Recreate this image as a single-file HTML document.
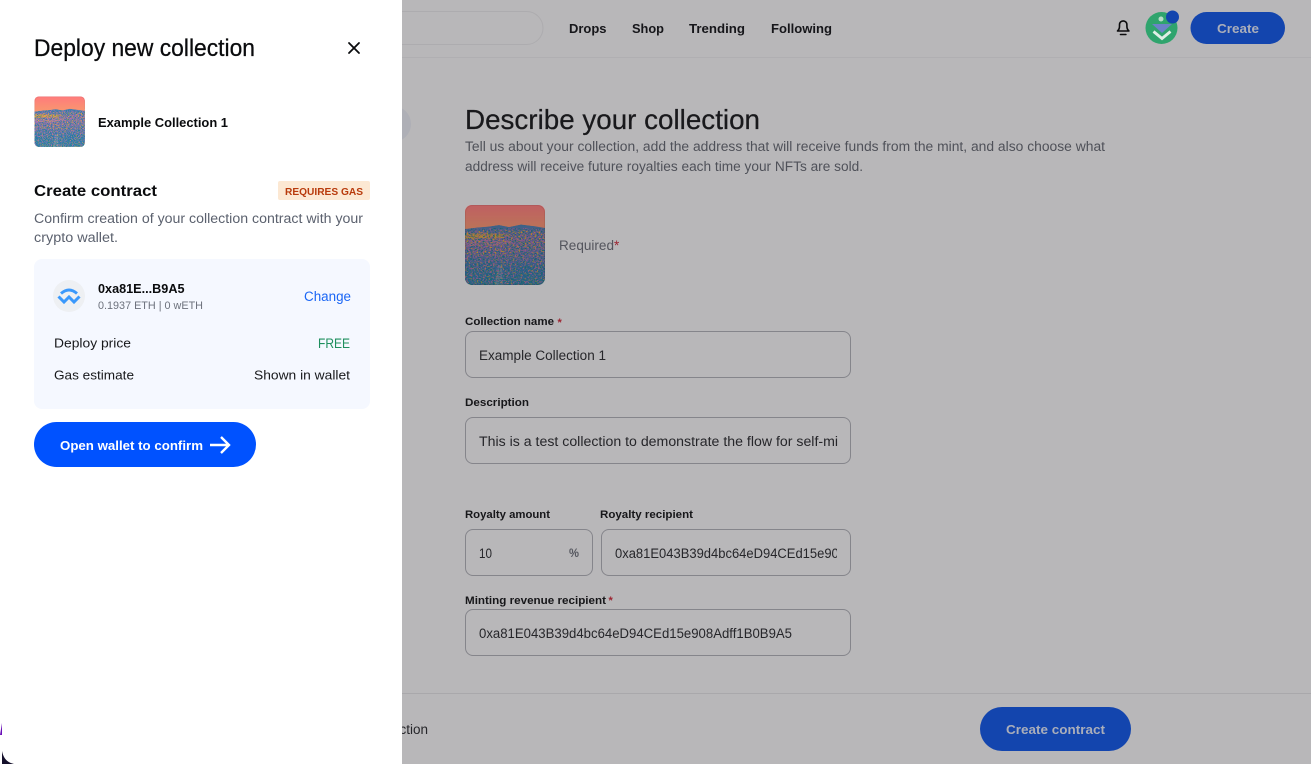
<!DOCTYPE html>
<html lang="en"><head><meta charset="utf-8"><title>Deploy new collection</title>
<style>
html,body{margin:0;padding:0;width:1311px;height:764px;overflow:hidden;background:#b8b7b9}
svg{display:block}
text{font-family:"Liberation Sans",sans-serif;white-space:pre}
.b{font-weight:700}
filter{color-interpolation-filters:sRGB}
</style></head><body>
<svg width="1311" height="764" viewBox="0 0 1311 764" xmlns="http://www.w3.org/2000/svg">
<defs>
<linearGradient id="sky" x1="0" y1="0" x2="0" y2="1"><stop offset="0" stop-color="#ff7b7c"/><stop offset="1" stop-color="#f8976f"/></linearGradient>
<linearGradient id="land" x1="0" y1="0" x2="0" y2="1"><stop offset="0" stop-color="#3f7fb0"/><stop offset=".2" stop-color="#8873ae"/><stop offset=".5" stop-color="#6f74b0"/><stop offset=".72" stop-color="#3a78b4"/><stop offset="1" stop-color="#2b82ab"/></linearGradient>
<filter id="sp1" x="0" y="0" width="100%" height="100%" color-interpolation-filters="sRGB"><feTurbulence type="fractalNoise" baseFrequency=".5 .8" numOctaves="2" seed="4"/><feColorMatrix values="0 0 0 0 .95  0 0 0 0 .68  0 0 0 0 .18  12 0 0 0 -7.2"/></filter>
<filter id="sp2" x="0" y="0" width="100%" height="100%" color-interpolation-filters="sRGB"><feTurbulence type="fractalNoise" baseFrequency=".6" numOctaves="2" seed="9"/><feColorMatrix values="0 0 0 0 .78  0 0 0 0 .42  0 0 0 0 .70  12 0 0 0 -6.8"/></filter>
<filter id="sp3" x="0" y="0" width="100%" height="100%" color-interpolation-filters="sRGB"><feTurbulence type="fractalNoise" baseFrequency=".5 .9" numOctaves="2" seed="15"/><feColorMatrix values="0 0 0 0 .10  0 0 0 0 .50  0 0 0 0 .58  12 0 0 0 -6.2"/></filter>
<clipPath id="c1"><rect width="80" height="80" rx="7"/></clipPath>
<clipPath id="addr"><rect x="466" y="530" width="371" height="44"/></clipPath>
<clipPath id="desc"><rect x="466" y="418" width="372" height="44"/></clipPath>
<g id="art"><g clip-path="url(#c1)">
<rect width="80" height="26" fill="url(#sky)"/>
<path d="M0 24 L12 22.500 L24 21.500 L34 20 L44 22 L56 19.500 L68 21 L80 23 V80 H0Z" fill="url(#land)"/>
<path d="M0 29 Q22 27 46 30 L34 33 Q14 33 0 34Z" fill="#e0a63a" opacity=".85"/>
<path d="M0 36 Q24 33 50 37 L30 41 Q12 40 0 42Z" fill="#cf7fae" opacity=".6"/>
<path d="M30 80 L33 60 L37 60 L38 80Z" fill="#a8b4bc" opacity=".45"/>
<rect y="23" width="80" height="57" filter="url(#sp3)"/>
<rect y="23" width="80" height="57" filter="url(#sp2)" opacity=".85"/>
<rect y="25" width="80" height="26" filter="url(#sp1)"/>
<rect y="51" width="80" height="29" filter="url(#sp1)" opacity=".6"/>
<path d="M0 0H80V20L68 21 56 19.500 44 22 34 20 24 21.500 12 22.500 0 24Z" fill="url(#sky)"/>
</g><rect x=".5" y=".5" width="79" height="79" rx="7" fill="none" stroke="#000" stroke-opacity=".08"/></g>
</defs>

<rect width="1311" height="764" fill="#b8b7b9"/>

<!-- top nav -->
<rect x="300" y="11.500" width="243" height="33" rx="16.500" fill="none" stroke="#adacaf"/>
<rect x="402" y="57" width="909" height="1" fill="#b0afb2"/>
<g font-size="13" class="b" fill="#16161a">
<text x="569" y="33" textLength="37.500" lengthAdjust="spacingAndGlyphs">Drops</text>
<text x="632" y="33" textLength="32" lengthAdjust="spacingAndGlyphs">Shop</text>
<text x="689" y="33" textLength="56" lengthAdjust="spacingAndGlyphs">Trending</text>
<text x="771" y="33" textLength="61" lengthAdjust="spacingAndGlyphs">Following</text>
</g>
<g fill="none" stroke="#0c0c0e" stroke-width="1.600" stroke-linejoin="round" stroke-linecap="round">
<path d="M1117.500 31c1.500-1.300 2-2.600 2-4.600v-1.800a3.700 3.700 0 0 1 7.400 0v1.800c0 2 .5 3.300 2 4.600z"/>
<path d="M1120.500 34.500h5.400"/>
</g>
<circle cx="1161.500" cy="28" r="16" fill="#2fa46d"/>
<circle cx="1161" cy="19" r="2.500" fill="#b8ddc9"/>
<path d="M1152 24h20l-10 9z" fill="#6a83c8"/>
<path d="M1153.500 31.500l8.500 7 8.500-7" fill="none" stroke="#dfeee6" stroke-width="2.800"/>
<circle cx="1172.500" cy="17" r="6.500" fill="#1345ae"/>
<rect x="1190.500" y="12" width="94.500" height="32" rx="16" fill="#1345ae"/>
<text x="1217" y="33" font-size="13" class="b" fill="#aaaeba" textLength="42" lengthAdjust="spacingAndGlyphs">Create</text>

<!-- step circle -->
<circle cx="393" cy="124" r="18" fill="#aeafb6"/>

<!-- main -->
<text x="465" y="129" font-size="28" fill="#19191c" stroke="#19191c" stroke-width=".25" textLength="295" lengthAdjust="spacingAndGlyphs">Describe your collection</text>
<g font-size="13.500" fill="#4f5159">
<text x="465" y="151" textLength="640" lengthAdjust="spacingAndGlyphs">Tell us about your collection, add the address that will receive funds from the mint, and also choose what</text>
<text x="465" y="171" textLength="398" lengthAdjust="spacingAndGlyphs">address will receive future royalties each time your NFTs are sold.</text>
</g>
<use href="#art" x="465" y="205"/>
<rect x="465" y="205" width="80" height="80" rx="7" fill="#1c1820" fill-opacity=".28"/>
<text x="559" y="250" font-size="13.500" fill="#54555d" textLength="55" lengthAdjust="spacingAndGlyphs">Required</text>
<text x="614" y="250" font-size="13.500" fill="#9c2330">*</text>

<g font-size="11" class="b" fill="#17171a">
<text x="465" y="325" textLength="89" lengthAdjust="spacingAndGlyphs">Collection name</text>
<text x="465" y="406" textLength="64" lengthAdjust="spacingAndGlyphs">Description</text>
<text x="465" y="518" textLength="85" lengthAdjust="spacingAndGlyphs">Royalty amount</text>
<text x="600" y="518" textLength="93" lengthAdjust="spacingAndGlyphs">Royalty recipient</text>
<text x="465" y="604" textLength="141" lengthAdjust="spacingAndGlyphs">Minting revenue recipient</text>
</g>
<g font-size="11" class="b" fill="#9c2330"><text x="557.500" y="326">*</text><text x="608.500" y="604">*</text></g>
<g fill="none" stroke="#85858b">
<rect x="465.500" y="331.500" width="385" height="46" rx="7.500"/>
<rect x="465.500" y="417.500" width="385" height="46" rx="7.500"/>
<rect x="465.500" y="529.500" width="127" height="46" rx="7.500"/>
<rect x="601.500" y="529.500" width="249" height="46" rx="7.500"/>
<rect x="465.500" y="609.500" width="385" height="46" rx="7.500"/>
</g>
<g font-size="13.500" fill="#26262a">
<text x="479" y="360" textLength="127" lengthAdjust="spacingAndGlyphs">Example Collection 1</text>
<g clip-path="url(#desc)"><text x="479" y="446" textLength="359" lengthAdjust="spacingAndGlyphs">This is a test collection to demonstrate the flow for self-mi</text></g>
<text x="479" y="558" textLength="13" lengthAdjust="spacingAndGlyphs">10</text>
<g clip-path="url(#addr)"><text x="615" y="558" textLength="231" lengthAdjust="spacingAndGlyphs">0xa81E043B39d4bc64eD94CEd15e908</text></g>
<text x="479" y="638" textLength="313" lengthAdjust="spacingAndGlyphs">0xa81E043B39d4bc64eD94CEd15e908Adff1B0B9A5</text>
</g>
<text x="569" y="557" font-size="11.500" class="b" fill="#55575f" textLength="10" lengthAdjust="spacingAndGlyphs">%</text>

<!-- bottom bar -->
<rect x="402" y="693" width="909" height="1" fill="#a9a8ab"/>
<text x="428" y="734" font-size="13.500" fill="#26262a" text-anchor="end">Deploy collection</text>
<rect x="980" y="707" width="151" height="44" rx="22" fill="#1345ae"/>
<text x="1006" y="734" font-size="13" class="b" fill="#aaaeba" textLength="99" lengthAdjust="spacingAndGlyphs">Create contract</text>

<!-- side panel -->
<rect x="0" y="0" width="402" height="764" fill="#fff"/>
<path d="M0 735H2V723Z" fill="#6a10b8"/>
<path d="M2 751V764H14Q4 762 2 751Z" fill="#15102c"/>
<text x="34" y="56" font-size="24" fill="#0a0b0d" stroke="#0a0b0d" stroke-width=".25" textLength="221" lengthAdjust="spacingAndGlyphs">Deploy new collection</text>
<path d="M349 43l10 10M359 43l-10 10" fill="none" stroke="#0a0b0d" stroke-width="1.800" stroke-linecap="round"/>

<use href="#art" transform="translate(34.500 96.500) scale(.63)"/>
<text x="98" y="127" font-size="13" class="b" fill="#0a0b0d" textLength="130" lengthAdjust="spacingAndGlyphs">Example Collection 1</text>

<text x="34" y="196" font-size="16" class="b" fill="#0a0b0d" textLength="123" lengthAdjust="spacingAndGlyphs">Create contract</text>
<rect x="278" y="181" width="92" height="19" rx="2" fill="#fce8d3"/>
<text x="285" y="195" font-size="10.500" class="b" fill="#b83a0c" textLength="78" lengthAdjust="spacingAndGlyphs">REQUIRES GAS</text>
<g font-size="13.500" fill="#5b616e">
<text x="34" y="223" textLength="329" lengthAdjust="spacingAndGlyphs">Confirm creation of your collection contract with your</text>
<text x="34" y="242" textLength="84" lengthAdjust="spacingAndGlyphs">crypto wallet.</text>
</g>

<rect x="34" y="259" width="336" height="150" rx="8" fill="#f5f8ff"/>
<circle cx="69" cy="296" r="16" fill="#eef0f3"/>
<g fill="none" stroke="#3b99fc" stroke-width="3">
<path d="M61 293.500Q69 286.500 77 293.500"/>
<path d="M58.500 296.500L64 302L69 297L74 302L79.500 296.500"/>
</g>
<text x="98" y="293" font-size="13" class="b" fill="#0a0b0d" textLength="86.500" lengthAdjust="spacingAndGlyphs">0xa81E...B9A5</text>
<text x="98" y="309" font-size="11" fill="#6c717c" textLength="105" lengthAdjust="spacingAndGlyphs">0.1937 ETH | 0 wETH</text>
<text x="304" y="301" font-size="13.500" fill="#1a66f5" textLength="47" lengthAdjust="spacingAndGlyphs">Change</text>
<g font-size="13" fill="#17181b">
<text x="54" y="347.500" textLength="77" lengthAdjust="spacingAndGlyphs">Deploy price</text>
<text x="54" y="379.500" textLength="80" lengthAdjust="spacingAndGlyphs">Gas estimate</text>
<text x="254" y="379.500" textLength="96" lengthAdjust="spacingAndGlyphs">Shown in wallet</text>
</g>
<text x="318" y="348" font-size="13.500" fill="#1e8f5e" textLength="32" lengthAdjust="spacingAndGlyphs">FREE</text>

<rect x="34" y="422" width="222" height="45" rx="22.500" fill="#0052ff"/>
<text x="60" y="450" font-size="13" class="b" fill="#fff" textLength="143" lengthAdjust="spacingAndGlyphs">Open wallet to confirm</text>
<path d="M210 445h18M221 437l8 8-8 8" fill="none" stroke="#fff" stroke-width="2.400"/>
</svg>
</body></html>
